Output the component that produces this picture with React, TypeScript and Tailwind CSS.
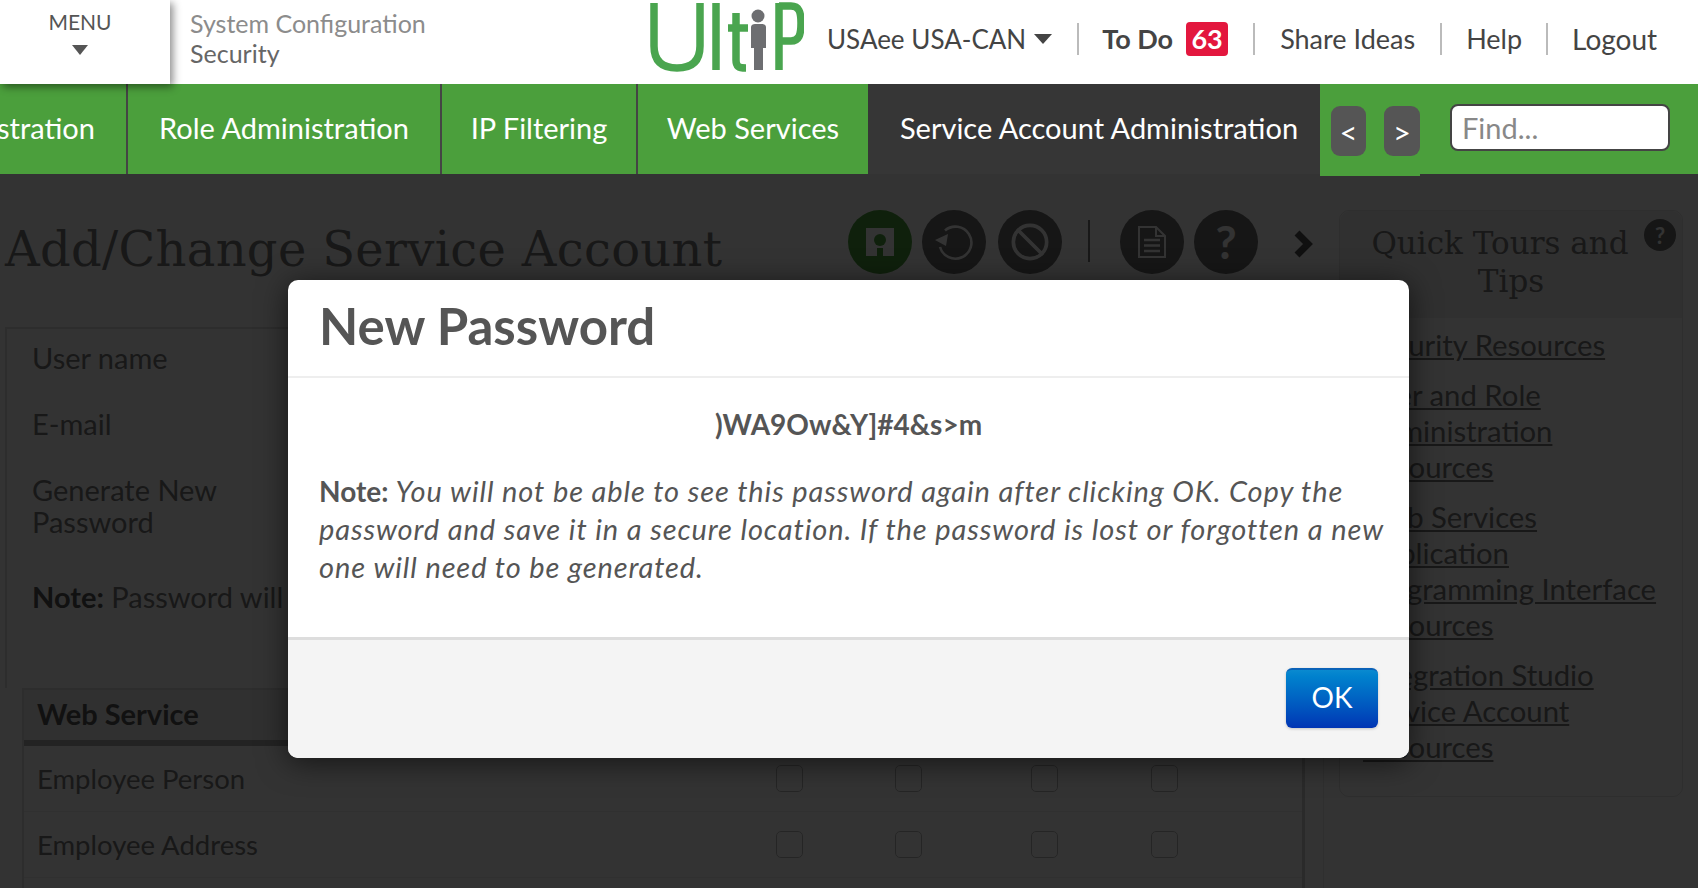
import { Ban } from "lucide-react";

const sans = "font-['Lato',sans-serif]";

const tabs = [
  { label: "Role Administration", width: "w-[314px]", sep: true },
  { label: "IP Filtering", width: "w-[196px]", sep: true },
  { label: "Web Services", width: "w-[230px]", sep: false },
];

const links = [
  ["Security Resources"],
  ["User and Role", "Administration", "Resources"],
  ["Web Services", "Application", "Programming Interface", "Resources"],
  ["Integration Studio", "Service Account", "Resources"],
];

const rows = ["Employee Person", "Employee Address"];

function Logo() {
  return (
    <svg width="154" height="74" viewBox="0 0 154 74" fill="none" aria-label="UltiPro">
      <g stroke="#4aa54f" strokeWidth="7.5">
        <path d="M4 3V46C4 61 12 68 27 68C42 68 50 61 50 46V3" />
        <path d="M66 3V70" />
        <path d="M86 13V60C86 66 88 68 96 68M78 28H98" />
        <path d="M129 3V70M129 6H141C149 6 151 12 151 23C151 35 149 41 141 41H129" />
      </g>
      <circle cx="108" cy="16" r="6.5" fill="#6d6e71" />
      <path d="M101 27C101 25 103 24 105 24H112C114 24 116 25 116 27V48H113V70H104V48H101Z" fill="#6d6e71" />
    </svg>
  );
}

function SaveIcon() {
  return (
    <svg width="30" height="30" viewBox="0 0 30 30">
      <path d="M1 1H29V29H18V21H12V29H1Z" fill="#fff" />
      <circle cx="15" cy="13" r="6" fill="#4ca03c" />
    </svg>
  );
}

function UndoIcon() {
  return (
    <svg width="42" height="40" viewBox="0 0 42 40" fill="none">
      <path d="M12 8.5A16 16 0 1 1 7 25" stroke="#fff" strokeWidth="2.6" />
      <path d="M2 18L15 12L13 24Z" fill="#fff" />
    </svg>
  );
}

function DocIcon() {
  return (
    <svg width="30" height="34" viewBox="0 0 30 34" fill="none" stroke="#fff" strokeWidth="2">
      <path d="M2 2H19L28 11V32H2Z" />
      <path d="M19 2V11H28" />
      <path d="M7 15H23M7 20.5H23M7 26H23" strokeWidth="2.4" />
    </svg>
  );
}

function Tool({ green, children }: { green?: boolean; children: React.ReactNode }) {
  return (
    <div
      className={`flex h-16 w-16 shrink-0 items-center justify-center rounded-full ${
        green ? "bg-[#4ca03c]" : "bg-[#6e6e6e]"
      }`}
    >
      {children}
    </div>
  );
}

function Box() {
  return <div className="h-[27px] w-[27px] rounded-[5px] border border-[#bbb]" />;
}

export default function App() {
  return (
    <div className={`relative h-[888px] w-[1698px] overflow-hidden bg-white ${sans}`}>
      {/* top bar */}
      <header className="relative z-20 flex h-[84px] items-center bg-white text-[#444]">
        <div className="relative z-10 flex h-[84px] w-[170px] shrink-0 flex-col items-center bg-white pr-[10px] pt-[9px] shadow-[3px_3px_8px_rgba(0,0,0,0.45)]">
          <span className="text-[21px] leading-[26px] text-[#555]">MENU</span>
          <span className="mt-[10px] h-0 w-0 border-x-[8px] border-t-[10px] border-x-transparent border-t-[#555]" />
        </div>
        <div className="ml-[20px] w-[460px] shrink-0 pb-[8px] text-[25px] leading-[30px]">
          <div className="text-[#8c8c8c]">System Configuration</div>
          <div className="text-[#666]">Security</div>
        </div>
        <div className="mb-[10px] shrink-0">
          <Logo />
        </div>
        <div className="mb-[6px] ml-[23px] flex items-center text-[27px] leading-[32px]">
          <span className="text-[26px]">USAee USA-CAN</span>
          <span className="ml-[8px] h-0 w-0 border-x-[9px] border-t-[10px] border-x-transparent border-t-[#444]" />
          <span className="ml-[25px] h-[32px] w-[2px] bg-[#bbb]" />
          <span className="ml-[23px] font-bold">To Do</span>
          <span className="ml-[13px] flex h-[34px] w-[42px] items-center justify-center rounded-[4px] bg-[#e3173e] font-bold text-white">
            63
          </span>
          <span className="ml-[25px] h-[32px] w-[2px] bg-[#bbb]" />
          <span className="ml-[25px]">Share Ideas</span>
          <span className="ml-[25px] h-[32px] w-[2px] bg-[#bbb]" />
          <span className="ml-[24px]">Help</span>
          <span className="ml-[24px] h-[32px] w-[2px] bg-[#bbb]" />
          <span className="ml-[24px] text-[28px]">Logout</span>
        </div>
      </header>

      {/* tabs */}
      <nav className="relative z-10 flex h-[90px] bg-[#4b9f3c] text-[29px] text-white">
        <div className="flex w-[128px] shrink-0 items-center justify-end overflow-hidden whitespace-nowrap border-r-2 border-[#444] pb-[2px] pr-[31px]">
          User Administration
        </div>
        {tabs.map((t) => (
          <div
            key={t.label}
            className={`flex shrink-0 items-center justify-center pb-[2px] ${t.width} ${
              t.sep ? "border-r-2 border-[#444]" : ""
            }`}
          >
            {t.label}
          </div>
        ))}
        <div className="flex w-[452px] shrink-0 items-center justify-center bg-[#363636] pb-[2px] pl-[10px]">
          Service Account Administration
        </div>
        <div className="flex h-[92px] w-[100px] shrink-0 items-start bg-[#4b9f3c] pl-[11px] pt-[22px] text-[31px]">
          <div className="flex h-[50px] w-[35px] items-center justify-center rounded-[9px] bg-[#555] pt-[2px]">&lt;</div>
          <div className="ml-[18px] flex h-[50px] w-[36px] items-center justify-center rounded-[9px] bg-[#555] pt-[2px]">&gt;</div>
        </div>
        <div className="ml-[30px] mt-[20px] flex h-[47px] w-[220px] items-center rounded-[8px] border-2 border-[#444] bg-white pl-[10px] pt-[1px] text-[#888]">
          Find...
        </div>
      </nav>

      {/* page under the modal */}
      <main className="flex h-[714px] text-[#787878]">
        <div className="flex w-[1324px] shrink-0 flex-col">
          <div className="flex h-[153px] pt-[36px]">
            <h1 className="w-[848px] shrink-0 pl-[5px] pt-[11px] font-['DejaVu_Serif',serif] text-[48px] leading-[56px] tracking-[0.3px]">
              Add/Change Service Account
            </h1>
            <div className="flex items-start">
              <Tool green>
                <SaveIcon />
              </Tool>
              <div className="ml-[10px]">
                <Tool>
                  <UndoIcon />
                </Tool>
              </div>
              <div className="ml-[12px]">
                <Tool>
                  <Ban size={40} strokeWidth={2.2} className="text-white" />
                </Tool>
              </div>
              <div className="ml-[26px] mt-[10px] h-[42px] w-[2px] bg-[#777]" />
              <div className="ml-[30px]">
                <Tool>
                  <DocIcon />
                </Tool>
              </div>
              <div className="ml-[10px]">
                <Tool>
                  <span className="text-[46px] font-bold leading-none text-white">?</span>
                </Tool>
              </div>
              <span className="ml-[35px] mt-[20px] text-[#505050]">
                <svg width="20" height="28" viewBox="0 0 20 28" fill="none">
                  <path d="M4 3L15 14L4 25" stroke="currentColor" strokeWidth="7" />
                </svg>
              </span>
            </div>
          </div>

          <div className="ml-[5px] h-[361px] shrink-0 border-l-2 border-t-2 border-[#e0e0e0] pl-[25px] text-[29px] leading-[32px]">
            <div className="pt-[13px]">User name</div>
            <div className="mt-[34px]">E-mail</div>
            <div className="mt-[34px] w-[225px]">Generate New Password</div>
            <div className="mt-[43px]">
              <b className="text-[#555]">Note:</b> Password will
            </div>
          </div>

          <div className="ml-[22px] flex-1 border-r border-[#e8e8e8] pr-[18px] text-[27.5px]">
            <div className="h-full border-l-2 border-r-[3px] border-t-2 border-l-[#e0e0e0] border-r-[#cfcfcf] border-t-[#e0e0e0]">
              <div className="flex h-[56px] items-center border-b-[6px] border-[#b0b0b0] bg-[#f0f0f0] pb-[3px] pl-[13px] text-[29px] font-bold text-[#555]">
                Web Service
              </div>
              {rows.map((r) => (
                <div key={r} className="flex h-[66px] items-center border-b border-[#eeeeee] pl-[13px]">
                  <span className="w-[739px] shrink-0">{r}</span>
                  <Box />
                  <div className="ml-[92px]">
                    <Box />
                  </div>
                  <div className="ml-[109px]">
                    <Box />
                  </div>
                  <div className="ml-[93px]">
                    <Box />
                  </div>
                </div>
              ))}
            </div>
          </div>
        </div>

        <aside className="ml-[15px] w-[344px] shrink-0 pt-[36px]">
          <div className="relative h-[587px] rounded-[10px] border border-[#e4e4e4]">
            <div className="h-[107px] rounded-t-[10px] bg-[#f0f0f0] px-[20px] pt-[13px] text-center font-['DejaVu_Serif',serif] text-[31px] leading-[38px]">
              <div className="pr-[22px]">Quick Tours and</div>
              <div>Tips</div>
            </div>
            <span className="absolute right-[6px] top-[8px] flex h-[32px] w-[32px] items-center justify-center rounded-full bg-[#6e6e6e] text-[22px] font-bold text-white">
              ?
            </span>
            <div className="pl-[23px] pt-[9px] text-[29.3px] leading-[36px]">
              {links.map((group) => (
                <div key={group[0]} className="mb-[14px]">
                  {group.map((l) => (
                    <div key={l}>
                      <a className="underline">{l}</a>
                    </div>
                  ))}
                </div>
              ))}
            </div>
          </div>
        </aside>
      </main>

      {/* modal */}
      <div className="absolute inset-0 z-[5] bg-black/80" />
      <div className="absolute left-[288px] top-[280px] z-30 flex h-[478px] w-[1121px] flex-col overflow-hidden rounded-[10px] bg-white text-[#555] shadow-[0_4px_30px_rgba(0,0,0,0.6)]">
        <div className="h-[98px] shrink-0 border-b-2 border-[#eee] pl-[31px] pt-[16px] text-[51px] font-bold leading-[60px]">
          New Password
        </div>
        <div className="h-[262px] shrink-0 border-b-[3px] border-[#ddd] pl-[31px] pr-[15px] text-[28px] leading-[38px]">
          <div className="pr-[16px] pt-[27px] text-center font-bold">)WA9Ow&amp;Y]#4&amp;s&gt;m</div>
          <p className="mt-[29px]">
            <b>Note:</b> <i className="text-[29px] tracking-[0.9px]">You will not be able to see this password again after clicking OK. Copy the password and save it in a secure location. If the password is lost or forgotten a new one will need to be generated.</i>
          </p>
        </div>
        <div className="flex flex-1 items-start justify-end bg-[#f4f4f4] pr-[31px] pt-[28px]">
          <button className="flex h-[60px] w-[92px] items-center justify-center rounded-[6px] border-t-2 border-[#0a62b8] bg-gradient-to-b from-[#0a8ad0] to-[#0034b4] pb-[5px] text-[28px] text-white shadow-[0_1px_3px_rgba(0,0,0,0.2)]">
            OK
          </button>
        </div>
      </div>
    </div>
  );
}
